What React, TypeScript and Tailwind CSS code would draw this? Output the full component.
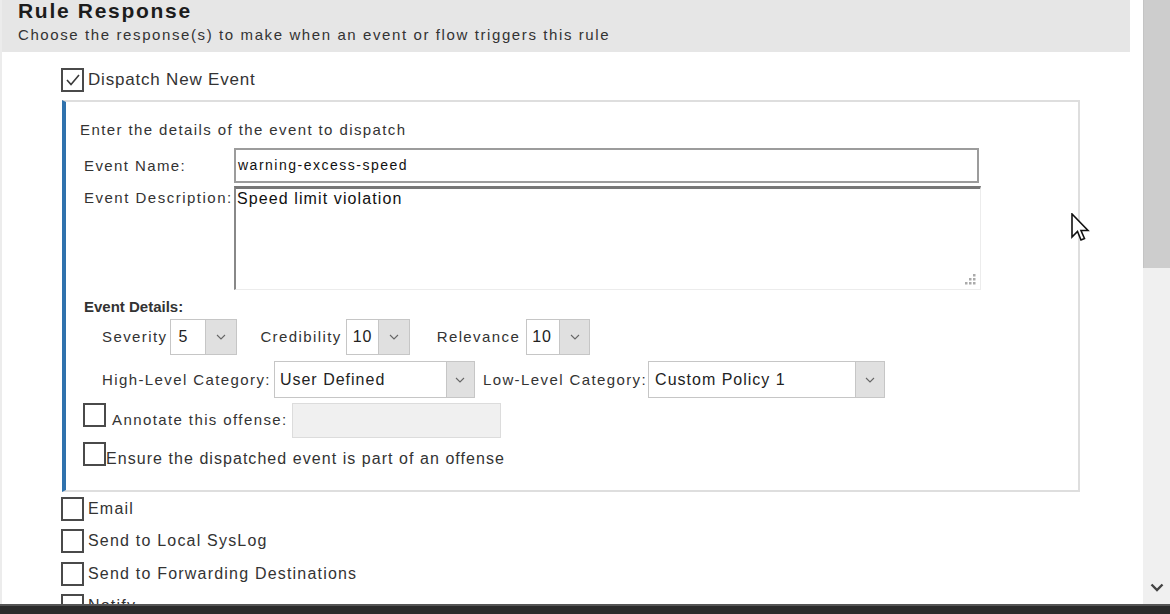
import React from "react";

const label = "text-[15px] tracking-[1.4px] text-[#333] leading-[20px] whitespace-nowrap";
const item = "text-[16px] tracking-[1.2px] text-[#333] leading-[20px] whitespace-nowrap";

function Box({ checked = false }: { checked?: boolean }) {
  return (
    <div className="w-[23px] h-[24px] shrink-0 border-2 border-[#4a4a4a] bg-white flex items-center justify-center">
      {checked && (
        <svg width="16" height="14" viewBox="0 0 16 14">
          <polyline points="2,7 6,11.5 14,2" fill="none" stroke="#3a3a3a" strokeWidth="1.6" />
        </svg>
      )}
    </div>
  );
}

function Chevron() {
  return (
    <svg width="10" height="6" viewBox="0 0 10 6">
      <polyline points="1,1 5,5 9,1" fill="none" stroke="#666" strokeWidth="1.1" />
    </svg>
  );
}

function Select({ value, width, arrow, pad }: { value: string; width: string; arrow: string; pad: string }) {
  return (
    <div className={`${width} h-full flex border border-[#c6c6c6] bg-white shrink-0`}>
      <div className={`flex-1 flex items-center ${pad} text-[16px] tracking-[1px] text-[#222] whitespace-nowrap`}>{value}</div>
      <div className={`${arrow} bg-[#e0e0e0] border-l border-[#c6c6c6] flex items-center justify-center`}>
        <Chevron />
      </div>
    </div>
  );
}

function Option({ text, mt }: { text: string; mt: string }) {
  return (
    <div className={`${mt} ml-[59px] flex items-center gap-[4px] h-[24px]`}>
      <Box />
      <span className={item}>{text}</span>
    </div>
  );
}

export default function App() {
  return (
    <div className="w-[1170px] h-[614px] overflow-hidden flex flex-col bg-white font-['Liberation_Sans',Arial,sans-serif]">
      <div className="h-[604px] flex">
        <div className="relative flex-1 overflow-hidden border-l-2 border-[#ececec]">
          {/* header */}
          <div className="w-[1128px] h-[52px] bg-[#e6e6e6] pl-[16px]">
            <div className="text-[21px] font-bold tracking-[1.7px] leading-[22px] text-[#1c1c1c]">Rule Response</div>
            <div className="mt-[3px] text-[15px] tracking-[1.6px] leading-[20px] text-[#333]">
              Choose the response(s) to make when an event or flow triggers this rule
            </div>
          </div>

          <div className="mt-[16px] ml-[59px] flex items-center gap-[4px] h-[24px]">
            <Box checked />
            <span className="text-[17px] tracking-[0.8px] text-[#333] leading-[20px]">Dispatch New Event</span>
          </div>

          {/* dispatch panel */}
          <div className="mt-[8px] ml-[60px] w-[1018px] h-[392px] border-2 border-l-4 border-[#dedede] border-l-[#2f72ad] pl-[14px]">
            <div className={`${label} mt-[18px]`}>Enter the details of the event to dispatch</div>

            <div className="mt-[8px] ml-[4px] flex items-center h-[35px]">
              <span className={`${label} w-[150px]`}>Event Name:</span>
              <div className="w-[745px] h-full border-2 border-[#9c9c9c] flex items-center pl-[2px] text-[14px] tracking-[1.5px] text-[#111]">
                warning-excess-speed
              </div>
            </div>

            <div className="mt-[3px] ml-[4px] flex items-start h-[104px]">
              <span className={`${label} w-[150px] pt-[2px] tracking-[1.5px]`}>Event Description:</span>
              <div className="relative w-[747px] h-full border-t-[3px] border-l-2 border-r border-b border-t-[#777] border-l-[#888] border-r-[#ececec] border-b-[#ececec] pl-[1px] text-[16px] tracking-[1.1px] text-[#111] leading-[20px]">
                Speed limit violation
                <svg className="absolute right-[4px] bottom-[4px]" width="12" height="12" viewBox="0 0 12 12">
                  <rect x="9" y="1" width="2.5" height="2.5" fill="#aaa" />
                  <rect x="5" y="5" width="2.5" height="2.5" fill="#aaa" />
                  <rect x="9" y="5" width="2.5" height="2.5" fill="#aaa" />
                  <rect x="1" y="9" width="2.5" height="2.5" fill="#aaa" />
                  <rect x="5" y="9" width="2.5" height="2.5" fill="#aaa" />
                  <rect x="9" y="9" width="2.5" height="2.5" fill="#aaa" />
                </svg>
              </div>
            </div>

            <div className="mt-[7px] ml-[4px] text-[15px] font-bold text-[#333] leading-[20px]">Event Details:</div>

            <div className="mt-[2px] ml-[22px] flex items-center h-[36px]">
              <span className={label}>Severity</span>
              <div className="ml-[3px] h-full flex">
                <Select value="5" width="w-[67px]" arrow="w-[31px]" pad="pl-[7px]" />
              </div>
              <span className={`${label} ml-[23px]`}>Credibility</span>
              <div className="ml-[4px] h-full flex">
                <Select value="10" width="w-[64px]" arrow="w-[31px]" pad="pl-[6px]" />
              </div>
              <span className={`${label} ml-[27px]`}>Relevance</span>
              <div className="ml-[6px] h-full flex">
                <Select value="10" width="w-[64px]" arrow="w-[30px]" pad="pl-[5px]" />
              </div>
            </div>

            <div className="mt-[6px] ml-[22px] flex items-center h-[37px]">
              <span className={label}>High-Level Category:</span>
              <div className="ml-[3px] h-full flex">
                <Select value="User Defined" width="w-[201px]" arrow="w-[28px]" pad="pl-[5px]" />
              </div>
              <span className={`${label} ml-[8px]`}>Low-Level Category:</span>
              <div className="ml-[1px] h-full flex">
                <Select value="Custom Policy 1" width="w-[237px]" arrow="w-[29px]" pad="pl-[6px]" />
              </div>
            </div>

            <div className="mt-[5px] ml-[3px] flex items-start h-[35px]">
              <Box />
              <span className={`${label} ml-[6px] mt-[7px]`}>Annotate this offense:</span>
              <div className="ml-[4px] w-[209px] h-[35px] bg-[#f0f0f0] border border-[#dcdcdc]" />
            </div>

            <div className="mt-[4px] ml-[3px] flex items-end h-[24px]">
              <Box />
              <span className={`${item} tracking-[1.05px] -mb-[3px]`}>Ensure the dispatched event is part of an offense</span>
            </div>
          </div>

          <Option text="Email" mt="mt-[5px]" />
          <Option text="Send to Local SysLog" mt="mt-[8px]" />
          <Option text="Send to Forwarding Destinations" mt="mt-[9px]" />
          <Option text="Notify" mt="mt-[8px]" />

          {/* mouse pointer over the page */}
          <svg className="absolute left-[1068px] top-[213px]" width="20" height="30" viewBox="0 0 20 30">
            <path d="M2 1 L2 24 L7.5 18.5 L11 27 L14.5 25.5 L11 17.5 L18 17.5 Z" fill="#fff" stroke="#111" strokeWidth="1.6" strokeLinejoin="miter" />
          </svg>
        </div>

        {/* scrollbar */}
        <div className="w-[27px] flex flex-col bg-[#f0f0f0]">
          <div className="h-[268px] bg-[#cdcdcd] border-l border-[#c4c4c4]" />
          <div className="flex-1 flex items-end justify-center pb-[12px]">
            <svg width="14" height="9" viewBox="0 0 14 9">
              <polyline points="1.5,1.5 7,7 12.5,1.5" fill="none" stroke="#444" strokeWidth="2.4" />
            </svg>
          </div>
        </div>
      </div>
      <div className="h-[10px] bg-[#2b2b2b] border-t-2 border-[#555]" />
    </div>
  );
}
